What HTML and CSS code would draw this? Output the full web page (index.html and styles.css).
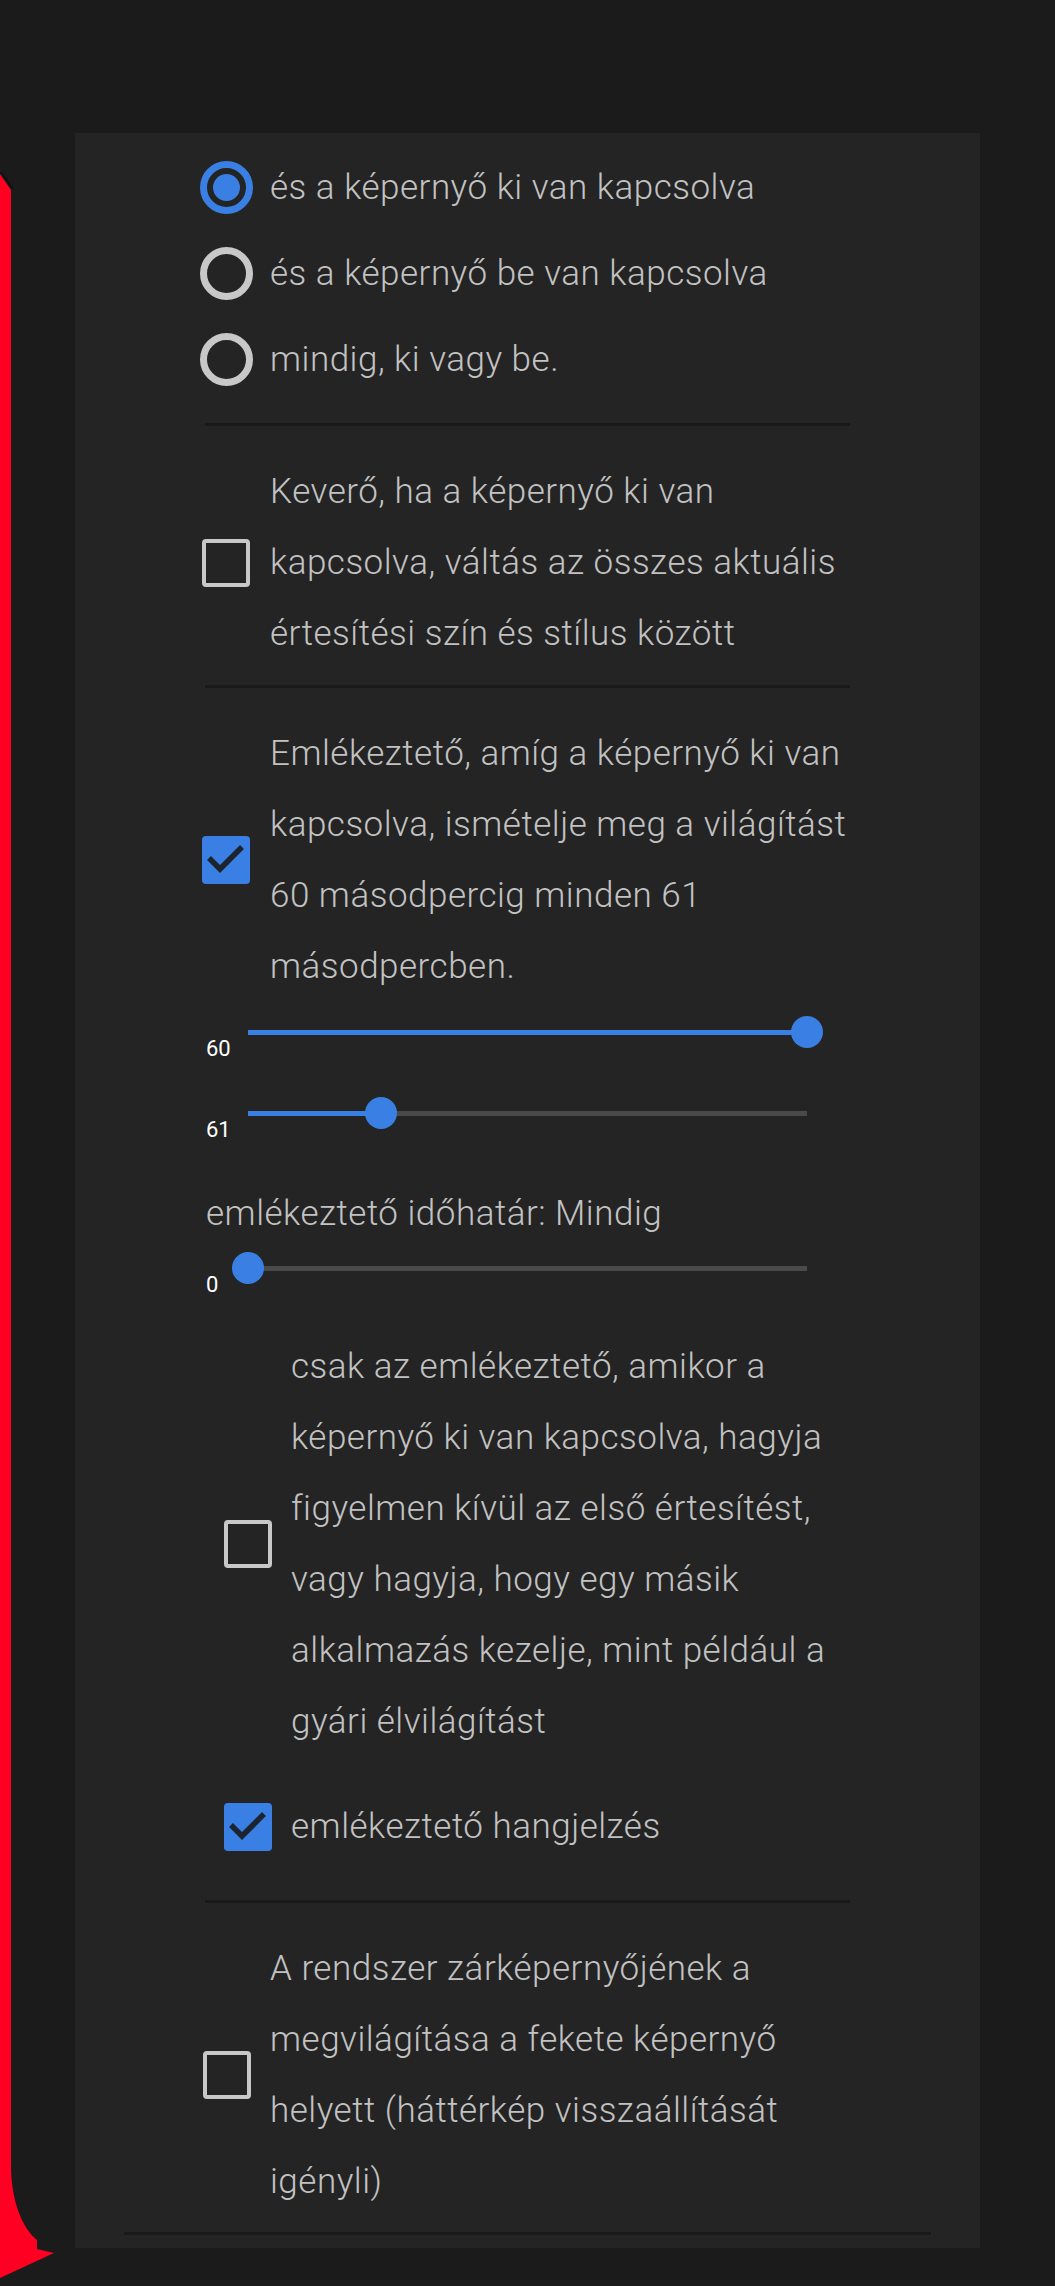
FILE: index.html
```html
<!DOCTYPE html>
<html lang="hu">
<head>
<meta charset="utf-8">
<title>Beállítások</title>
<link rel="stylesheet" href="styles.css">
</head>
<body>
<svg class="edge" width="60" height="2286" viewBox="0 0 60 2286" aria-hidden="true">
  <path d="M0,174 L11,190 L11,2165 C11,2200 22,2228 37,2240 L37,2249 L54,2253 L0,2278 Z" fill="#ff0022"/>
  <path d="M1,172 L13,189" stroke="#111" stroke-width="2" fill="none"/>
</svg>
<main class="panel">
  <div class="content">
    <div class="radio-group">
      <div class="radio-row">
        <span class="radio checked"><span class="dot"></span></span>
        <span class="label">és a képernyő ki van kapcsolva</span>
      </div>
      <div class="radio-row">
        <span class="radio"></span>
        <span class="label">és a képernyő be van kapcsolva</span>
      </div>
      <div class="radio-row">
        <span class="radio"></span>
        <span class="label">mindig, ki vagy be.</span>
      </div>
    </div>

    <div class="sep"></div>

    <section class="section section-a">
      <div class="check-row">
        <span class="box-cell"><span class="box"></span></span>
        <span class="label">Keverő, ha a képernyő ki van<br>kapcsolva, váltás az összes aktuális<br>értesítési szín és stílus között</span>
      </div>
    </section>

    <div class="sep"></div>

    <section class="section section-b">
      <div class="check-row">
        <span class="box-cell"><span class="box checked"><svg viewBox="0 0 48 48" width="48" height="48"><polyline points="7,22 18,33 40,11" fill="none" stroke="#1c2430" stroke-width="5.5"/></svg></span></span>
        <span class="label">Emlékeztető, amíg a képernyő ki van<br>kapcsolva, ismételje meg a világítást<br>60 másodpercig minden 61<br>másodpercben.</span>
      </div>

      <div class="slider-row">
        <span class="slider-value">60</span>
        <span class="track">
          <span class="fill" style="width:100%"></span>
          <span class="thumb" style="left:100%"></span>
        </span>
      </div>
      <div class="slider-row second">
        <span class="slider-value">61</span>
        <span class="track">
          <span class="fill" style="width:23.8%"></span>
          <span class="thumb" style="left:23.8%"></span>
        </span>
      </div>

      <div class="timeout-label">emlékeztető időhatár: Mindig</div>
      <div class="slider-row">
        <span class="slider-value">0</span>
        <span class="track">
          <span class="fill" style="width:0%"></span>
          <span class="thumb" style="left:0%"></span>
        </span>
      </div>

      <div class="check-row sub first-sub">
        <span class="box-cell"><span class="box"></span></span>
        <span class="label">csak az emlékeztető, amikor a<br>képernyő ki van kapcsolva, hagyja<br>figyelmen kívül az első értesítést,<br>vagy hagyja, hogy egy másik<br>alkalmazás kezelje, mint például a<br>gyári élvilágítást</span>
      </div>
      <div class="check-row sub second-sub">
        <span class="box-cell"><span class="box checked"><svg viewBox="0 0 48 48" width="48" height="48"><polyline points="7,22 18,33 40,11" fill="none" stroke="#1c2430" stroke-width="5.5"/></svg></span></span>
        <span class="label">emlékeztető hangjelzés</span>
      </div>
    </section>

    <div class="sep sep-c"></div>

    <section class="section section-c">
      <div class="check-row">
        <span class="box-cell"><span class="box"></span></span>
        <span class="label">A rendszer zárképernyőjének a<br>megvilágítása a fekete képernyő<br>helyett (háttérkép visszaállítását<br>igényli)</span>
      </div>
    </section>
  </div>
  <div class="sep-wide"></div>
</main>
</body>
</html>
```

FILE: styles.css
```css
html, body {
  margin: 0;
  padding: 0;
}

body {
  background: #1b1b1b;
  width: 1055px;
  height: 2286px;
  overflow: hidden;
  position: relative;
  font-family: Roboto, "Liberation Sans", sans-serif;
}

.edge {
  position: absolute;
  left: 0;
  top: 0;
}

.panel {
  margin: 133px 0 0 75px;
  width: 905px;
  background: #242424;
  padding: 11px 0 13px 0;
  box-sizing: border-box;
}

.content {
  margin-left: 125px;
  width: 650px;
}

.label {
  font-weight: 300;
  font-size: 35px;
  letter-spacing: 0.5px;
  line-height: 71px;
  color: #c2c2c2;
  white-space: nowrap;
}

/* radio group */
.radio-row {
  display: flex;
  align-items: center;
  height: 86px;
}

.radio {
  width: 53px;
  height: 53px;
  box-sizing: border-box;
  border: 7px solid #c8c8c8;
  border-radius: 50%;
  margin-right: 17px;
  display: flex;
  align-items: center;
  justify-content: center;
  flex: none;
}

.radio.checked {
  border-color: #3a80e4;
}

.dot {
  width: 27px;
  height: 27px;
  border-radius: 50%;
  background: #3a80e4;
}

/* separators */
.sep {
  height: 3px;
  background: #191919;
  margin-left: 5px;
  width: 645px;
  margin-top: 21px;
}

.section-a + .sep {
  margin-top: 0;
}

.sep-c {
  margin-top: 38px;
}

.sep-wide {
  height: 3px;
  background: #191919;
  margin: 15px 49px 0 49px;
}

/* sections */
.section {
  padding-top: 30px;
}

.section-a {
  padding-bottom: 16px;
}

.check-row {
  display: flex;
  align-items: center;
}

.box-cell {
  width: 70px;
  flex: none;
  display: flex;
  align-items: center;
}

.box {
  width: 48px;
  height: 48px;
  box-sizing: border-box;
  border: 4px solid #c8c8c8;
  border-radius: 4px;
  margin-left: 2px;
  display: block;
}

.box.checked {
  border: none;
  background: #3a80e4;
}

.box svg {
  display: block;
}

.section-c .box {
  margin-left: 3px;
}

/* sliders */
.slider-row {
  display: flex;
  align-items: center;
  height: 60px;
}

.slider-row.second {
  margin-top: 21px;
}

.slider-value {
  width: 42px;
  margin-left: 6px;
  margin-top: 32px;
  font-size: 22px;
  line-height: 21px;
  font-weight: 400;
  color: #ffffff;
  flex: none;
}

.track {
  position: relative;
  width: 559px;
  height: 5px;
  background: #4a4a4a;
  display: block;
}

.fill {
  display: block;
  height: 100%;
  background: #3a80e4;
}

.thumb {
  position: absolute;
  top: 50%;
  width: 32px;
  height: 32px;
  border-radius: 50%;
  background: #3a80e4;
  transform: translate(-50%, -50%);
}

.timeout-label {
  margin-top: 47px;
  margin-left: 6px;
  font-weight: 300;
  font-size: 35px;
  letter-spacing: 0.5px;
  line-height: 48px;
  color: #c2c2c2;
  white-space: nowrap;
}

/* indented sub options */
.check-row.sub {
  padding-left: 21px;
}

.check-row.sub .box {
  margin-left: 3px;
}

.first-sub {
  margin-top: 33px;
}

.second-sub {
  margin-top: 34px;
}
```
